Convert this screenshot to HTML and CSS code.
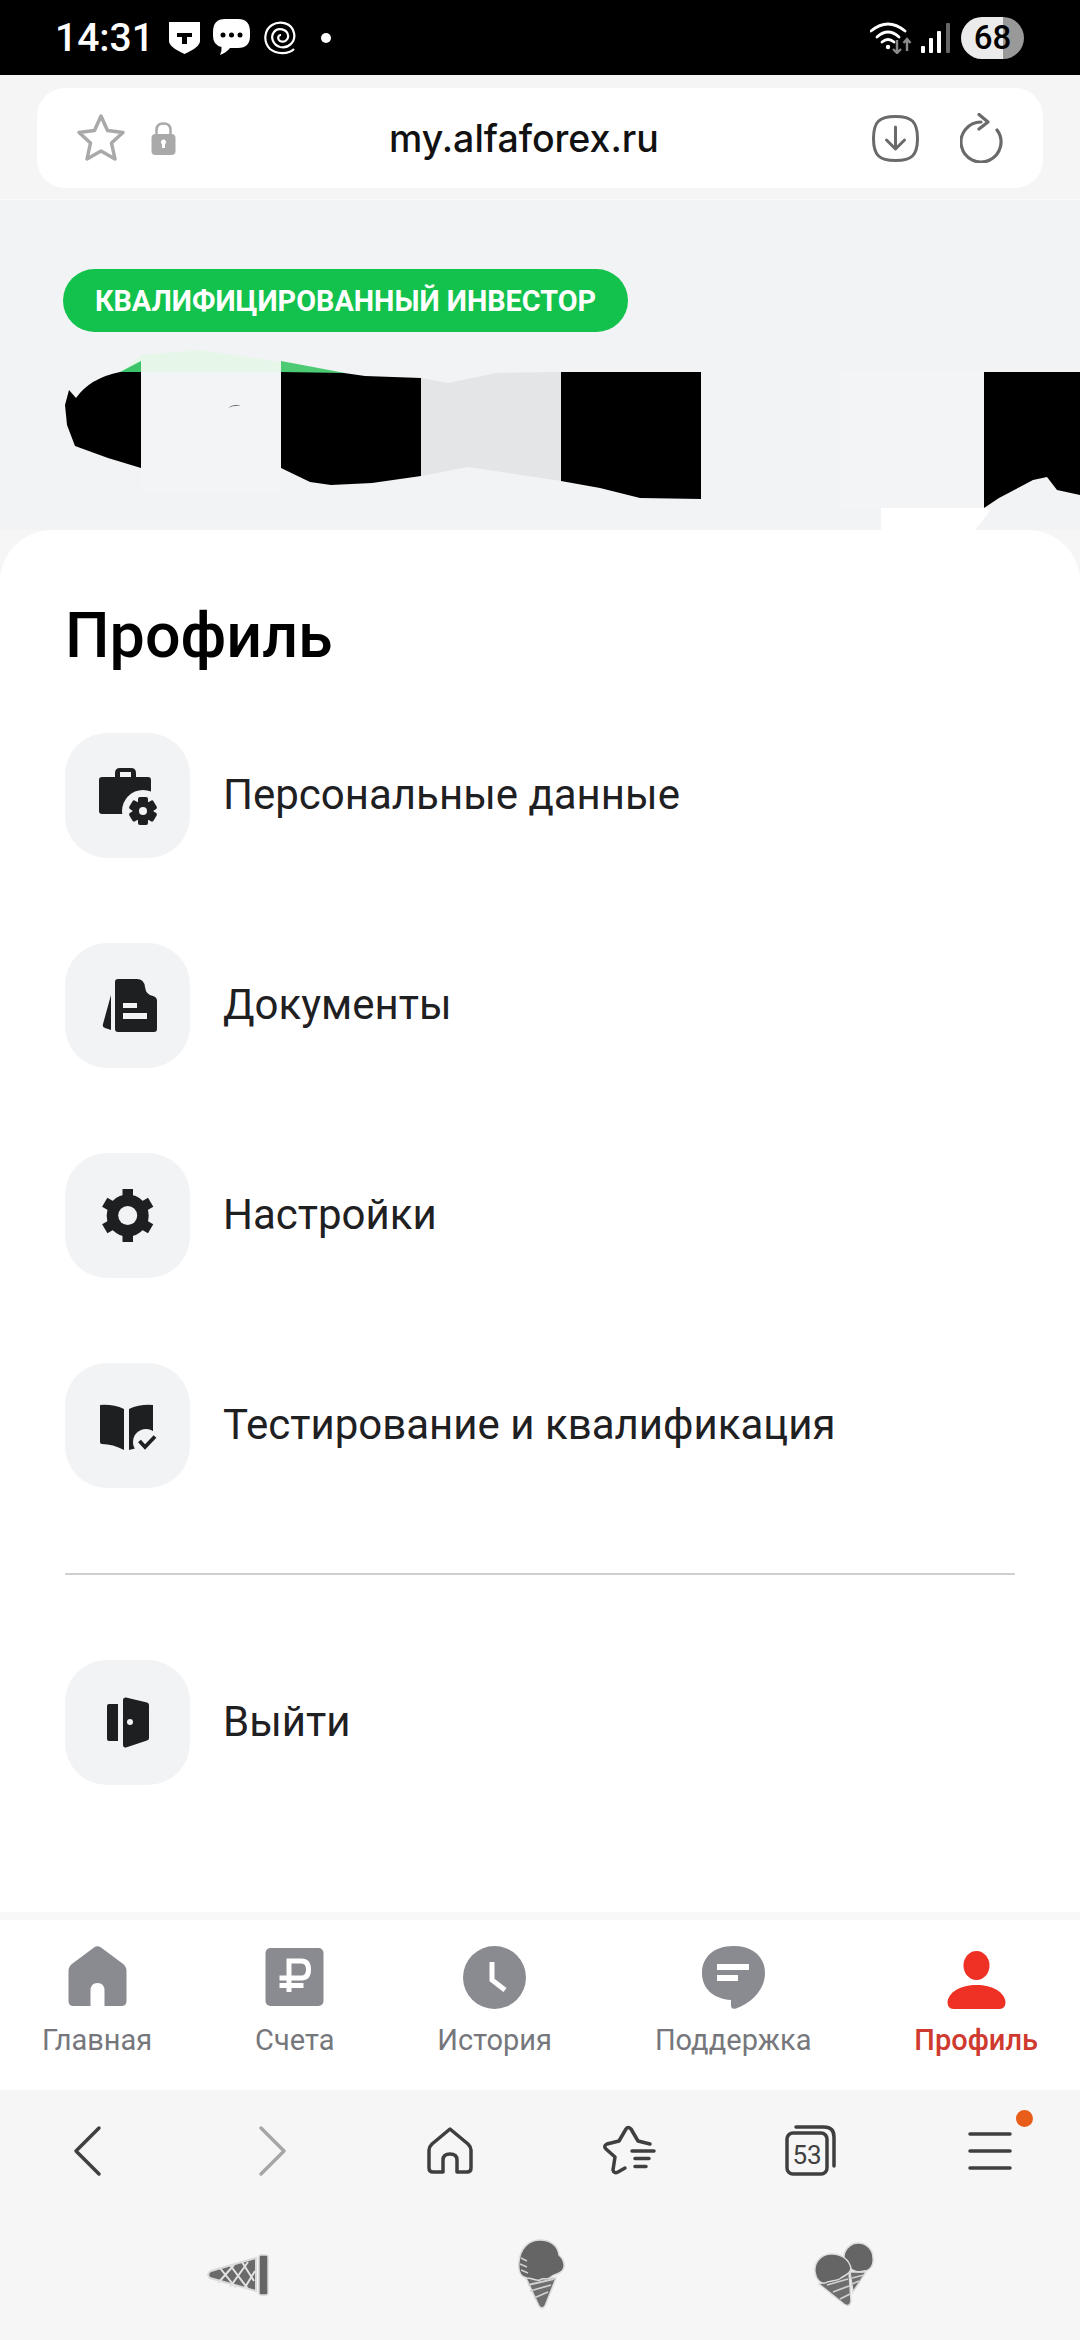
FILE: index.html
```html
<!DOCTYPE html>
<html lang="ru">
<head>
    <meta charset="UTF-8">
    <meta name="viewport" content="width=device-width, initial-scale=1.0">
    <title>Профиль</title>
    <link rel="stylesheet" href="styles.css">
</head>
<body>
    <!-- Status bar -->
    <div class="status-bar">
        <div class="status-left">
            <span class="status-time">14:31</span>
            <svg class="st-shield" viewBox="0 0 31 32"><path d="M0 0H31V19Q31 25 15.500 32Q0 25 0 19Z" fill="#fff"/><path d="M8 11H23V15H18V22H13V15H8Z" fill="#000"/></svg>
            <svg class="st-bubble" viewBox="0 0 37 37"><path d="M12 0H25Q37 0 37 13V17Q37 29 25 29H17Q13 34 7 36Q9 32 8.500 28Q0 26 0 17V13Q0 0 12 0Z" fill="#fff"/><circle cx="10" cy="16" r="2.500"/><circle cx="18.500" cy="16" r="2.500"/><circle cx="27" cy="16" r="2.500"/></svg>
            <svg class="st-spiral" viewBox="0 0 32 34" fill="none" stroke="#fff" stroke-width="2.200"><path d="M30 28C24 34 12 33 6 28C-1 21 0 9 8 4C16 -1 28 2 30 12C32 21 24 28 16 26C9 24 6 16 10 11C14 6 23 8 24 14C25 19 20 22 16 20C13 18 14 14 17 14"/></svg>
            <span class="status-dot"></span>
        </div>
        <div class="status-right">
            <svg class="st-wifi" viewBox="0 0 42 32" fill="none"><g stroke="#fff" stroke-width="2.800" stroke-linecap="round"><path d="M1 9Q18 -5 35 9"/><path d="M7 15Q18 5 29 15"/><path d="M12 20Q18 15 24 20"/></g><circle cx="18" cy="25" r="2.200" fill="#fff"/><g stroke="#8a8a8a" stroke-width="2.400" fill="none"><path d="M27 18V31M23 27L27 31L31 27"/><path d="M37 29V17M33.500 21L37 17L40.500 21"/></g></svg>
            <svg class="st-signal" viewBox="0 0 29 30"><rect x="0" y="23" width="4" height="7" rx="1" fill="#fff"/><rect x="8" y="15" width="4" height="15" rx="1" fill="#fff"/><rect x="16" y="8" width="4" height="22" rx="1" fill="#fff"/><rect x="25" y="0" width="4" height="30" rx="1" fill="#666"/></svg>
            <div class="battery"><span class="battery-level">68</span></div>
        </div>
    </div>

    <!-- Address bar -->
    <div class="address-wrap">
        <div class="address-bar">
            <svg class="addr-star" viewBox="0 0 50 50"><path d="M25 3L31.500 17.500L47 19.500L35.500 30L39 46L25 38L11 46L14.500 30L3 19.500L18.500 17.500Z" fill="none" stroke="#a9a9a9" stroke-width="3.500" stroke-linejoin="round"/></svg>
            <svg class="addr-lock" viewBox="0 0 25 33"><path d="M5.500 15V8Q5.500 1.500 12.500 1.500Q19.500 1.500 19.500 8V15" fill="none" stroke="#a9a9a9" stroke-width="2.500"/><rect x="0.500" y="12" width="24" height="21" rx="4" fill="#a9a9a9"/><path d="M12.500 18V26" stroke="#fff" stroke-width="3"/><circle cx="12.500" cy="20" r="2.500" fill="#fff"/></svg>
            <span class="address-text">my.alfaforex.ru</span>
            <svg class="addr-download" viewBox="0 0 47 47" fill="none" stroke="#6a6a6a" stroke-width="3" stroke-linecap="round" stroke-linejoin="round"><path d="M23.500 1.500C40 1.500 45.500 7 45.500 23.500C45.500 40 40 45.500 23.500 45.500C7 45.500 1.500 40 1.500 23.500C1.500 7 7 1.500 23.500 1.500Z"/><path d="M23.500 12V33M14.500 25L23.500 34L32.500 25"/></svg>
            <svg class="addr-reload" viewBox="0 0 44 50" fill="none" stroke="#6a6a6a" stroke-width="3.200" stroke-linecap="round" stroke-linejoin="round"><path d="M21 9A20 20 0 1 0 37 17"/><path d="M19 1.500L28 9L19 16"/></svg>
        </div>
    </div>

    <!-- Hero with the hidden personal data -->
    <div class="hero">
        <span class="badge">КВАЛИФИЦИРОВАННЫЙ ИНВЕСТОР</span>
        <svg class="hero-mask" viewBox="0 340 1080 190">
            <path d="M120 372L141 355L200 350L281 362L345 373H141Z" fill="#e6f7ea"/>
            <path d="M120 372L141 361V372Z" fill="#3cc468"/>
            <path d="M281 361L345 373H281Z" fill="#4ccb74"/>
            <rect x="141" y="372" width="140" height="120" fill="#f3f4f6"/>
            <path d="M228 408Q234 403 241 406Q234 405 228 408Z" fill="#555"/>
            <path d="M141 372V468L108 458L75 446L67 425L65 405L69 390L76 398Q90 378 120 372Z" fill="#000"/>
            <path d="M281 372L344 373L365 376L421 378V476L372 483L331 485L310 482L281 468Z" fill="#000"/>
            <path d="M421 378L448 383L496 373L561 372V481L468 467L421 476Z" fill="#e4e5e7"/>
            <path d="M561 372H701V499L640 498L600 488L561 481Z" fill="#000"/>
            <rect x="840" y="372" width="144" height="136" fill="#f3f4f6"/>
            <path d="M984 372H1080V495L1057 490L1047 477L1033 480L999 498L984 508Z" fill="#000"/>
            <path d="M881 508H985L990 511L975 530H881Z" fill="#fff"/>
        </svg>
    </div>

    <!-- Profile card -->
    <div class="card">
        <h1 class="card-title">Профиль</h1>
        <div class="menu-list">
            <div class="menu-item">
                <span class="menu-icon">
                    <svg viewBox="0 0 125 125" fill="#1e1f21">
                        <path d="M50 44V40Q50 35 55 35H66Q71 35 71 40V44H83Q86 44 86 47V81H37Q34 81 34 78V47Q34 44 37 44ZM55 44H66V39H55Z" fill-rule="evenodd"/>
                        <circle cx="78" cy="78" r="21" fill="#f2f3f5"/>
                        <g>
                            <rect x="73" y="64" width="10" height="28" rx="2"/>
                            <rect x="73" y="64" width="10" height="28" rx="2" transform="rotate(60 78 78)"/>
                            <rect x="73" y="64" width="10" height="28" rx="2" transform="rotate(120 78 78)"/>
                        </g>
                        <circle cx="78" cy="78" r="10.500"/>
                        <circle cx="78" cy="78" r="4" fill="#f2f3f5"/>
                    </svg>
                </span>
                <span class="menu-label">Персональные данные</span>
            </div>
            <div class="menu-item">
                <span class="menu-icon">
                    <svg viewBox="0 0 125 125" fill="#1e1f21">
                        <path d="M53 36H72Q79 36 80 44Q81 52 88 53Q92 54 92 58V86Q92 89 89 89H53Q50 89 50 86V39Q50 36 53 36Z"/>
                        <path d="M46 52V87L40 85Q37 84 38 81Z"/>
                        <rect x="58" y="60" width="14" height="5" fill="#f2f3f5"/>
                        <rect x="58" y="70" width="24" height="6" fill="#f2f3f5"/>
                    </svg>
                </span>
                <span class="menu-label">Документы</span>
            </div>
            <div class="menu-item">
                <span class="menu-icon">
                    <svg viewBox="0 0 125 125" fill="#1e1f21">
                        <rect x="57.500" y="36" width="10.500" height="53"/>
                        <rect x="57.500" y="36" width="10.500" height="53" transform="rotate(60 62.700 62.500)"/>
                        <rect x="57.500" y="36" width="10.500" height="53" transform="rotate(120 62.700 62.500)"/>
                        <circle cx="62.700" cy="62.500" r="21"/>
                        <circle cx="62.700" cy="62.500" r="9.500" fill="#f2f3f5"/>
                    </svg>
                </span>
                <span class="menu-label">Настройки</span>
            </div>
            <div class="menu-item">
                <span class="menu-icon">
                    <svg viewBox="0 0 125 125" fill="#1e1f21">
                        <path d="M35 42Q48 41 59 46V87Q48 81 37 81Q35 81 35 79Z"/>
                        <path d="M64 46Q75 41 88 42V79Q88 81 86 81H64Z"/>
                        <path d="M64 87V81L72 80L72 85Z"/>
                        <circle cx="81" cy="79" r="13" fill="#f2f3f5"/>
                        <path d="M74.500 78L80 84L90 73.500" fill="none" stroke="#1e1f21" stroke-width="3.800"/>
                    </svg>
                </span>
                <span class="menu-label">Тестирование и квалификация</span>
            </div>
        </div>
        <div class="divider"></div>
        <div class="menu-item">
            <span class="menu-icon">
                <svg viewBox="0 0 125 125" fill="#1e1f21">
                    <path d="M44 44H53V81H44Q42 81 42 79V46Q42 44 44 44Z"/>
                    <path d="M58 40Q58 37 61 37.500L82 42.500Q84 43 84 45V78Q84 80 82 80.500L61 87.500Q58 88 58 85Z"/>
                    <circle cx="65" cy="62" r="3" fill="#f2f3f5"/>
                </svg>
            </span>
            <span class="menu-label">Выйти</span>
        </div>
    </div>

    <!-- Site navigation -->
    <nav class="tabs">
        <div class="tab">
            <svg class="tab-icon" viewBox="-2.500 0 63 63" fill="#8a8b91"><path d="M25.500 1.500Q29 -1 32.500 1.500L54 17.500Q58 20.500 58 25V55Q58 60 53 60H36V45Q36 37 29 37Q22 37 22 45V60H5Q0 60 0 55V25Q0 20.500 4 17.500Z"/></svg>
            <span class="tab-label">Главная</span>
        </div>
        <div class="tab">
            <svg class="tab-icon" viewBox="-2.500 -2 63 63"><rect width="58" height="58" rx="5" fill="#8a8b91"/><path d="M23.500 44V13H36Q43 13 43 21.500Q43 30 36 30H14M14 37.500H38" fill="none" stroke="#fff" stroke-width="5"/></svg>
            <span class="tab-label">Счета</span>
        </div>
        <div class="tab">
            <svg class="tab-icon" viewBox="0 0 63 63"><circle cx="31.500" cy="31.500" r="31.500" fill="#8a8b91"/><path d="M29 16V34L42 44" fill="none" stroke="#fff" stroke-width="5"/></svg>
            <span class="tab-label">История</span>
        </div>
        <div class="tab">
            <svg class="tab-icon" viewBox="0 0 63 63"><path d="M31.500 0C51 0 63 11 63 27C63 42 52 56 34 62.500Q29 64 29 59V54C12 53 0 43 0 27C0 11 12 0 31.500 0Z" fill="#8a8b91"/><rect x="15" y="18" width="32" height="6" fill="#fff"/><rect x="15" y="29" width="21" height="6" fill="#fff"/></svg>
            <span class="tab-label">Поддержка</span>
        </div>
        <div class="tab tab-active">
            <svg class="tab-icon" viewBox="-2.500 -5 63 63" fill="#ee3124"><ellipse cx="29" cy="14.500" rx="13" ry="14.500"/><path d="M0 51C1 41 13 34 29 34C45 34 57 41 58 51Q58 58 52 58H6Q0 58 0 51Z"/></svg>
            <span class="tab-label">Профиль</span>
        </div>
    </nav>

    <!-- Browser toolbar -->
    <div class="browser-bottom">
        <div class="toolbar">
            <svg class="tool" viewBox="0 0 60 60" fill="none" stroke="#3f3f3f" stroke-width="3.500" stroke-linecap="round" stroke-linejoin="round"><path d="M39 7L16 30L39 53"/></svg>
            <svg class="tool" viewBox="0 0 60 60" fill="none" stroke="#a6a6a6" stroke-width="3.500" stroke-linecap="round" stroke-linejoin="round"><path d="M21 7L44 30L21 53"/></svg>
            <svg class="tool" viewBox="0 0 60 60" fill="none" stroke="#3f3f3f" stroke-width="3.500" stroke-linejoin="round"><path d="M30 8L48 23Q51 26 51 29V47Q51 51 47 51H37V39Q37 33 30 33Q23 33 23 39V51H13Q9 51 9 47V29Q9 26 12 23Z"/></svg>
            <svg class="tool" viewBox="0 0 60 60" fill="none" stroke="#3f3f3f" stroke-width="3.500" stroke-linecap="round" stroke-linejoin="round"><path d="M32 30H54M35 37.500H49M35 45.500H46"/><path d="M50 23L38 20L31 8Q28 5 26 8L19 20L7 23Q3 25 6 28L15 36L13 49Q14 53 18 51L25 47"/></svg>
            <svg class="tool" viewBox="0 0 60 60" fill="none" stroke="#3f3f3f" stroke-width="3.500" stroke-linecap="round"><rect x="7" y="12" width="40" height="41" rx="6"/><path d="M16 6H44Q54 6 54 16V45"/><text class="tool-count" x="27" y="43" text-anchor="middle">53</text></svg>
            <div class="tool tool-menu">
                <svg viewBox="0 0 60 60" fill="none" stroke="#3f3f3f" stroke-width="3.500" stroke-linecap="round"><path d="M10 13H50M10 30H50M10 47H50"/></svg>
                <span class="menu-dot"></span>
            </div>
        </div>
        <div class="stickers">
            <svg class="sticker-cone" viewBox="0 0 63 43">
                <path d="M50 5L5 18Q0 21 4 25L50 38Z" fill="#6a6a6a" stroke="#d9d9d9" stroke-width="2"/>
                <path d="M14 15L30 35M24 12L42 36M36 9L48 28M12 30L28 12M24 34L42 9M38 36L49 18" stroke="#e2e2e2" stroke-width="2" fill="none"/>
                <rect x="53" y="2" width="9" height="40" rx="2" fill="#666" stroke="#d9d9d9" stroke-width="1.500"/>
            </svg>
            <svg class="sticker-one" viewBox="0 0 47 72">
                <path d="M8 40L21 68Q24 72 27 68L38 40Z" fill="#6e6e6e" stroke="#dcdcdc" stroke-width="1.500"/>
                <path d="M10 47L36 41M12 53L33 47M16 60L30 54" stroke="#d0d0d0" stroke-width="1.800" fill="none"/>
                <path d="M22 2C33 2 40 8 41 17C46 21 48 29 44 33C40 37 36 36 33 39C29 43 25 39 22 42C18 43 14 40 9 40C2 39 0 32 1 24C2 11 10 2 22 2Z" fill="#656565" stroke="#dcdcdc" stroke-width="1.500"/>
                <path d="M3 20L9 23M2 26L9 29M3 32L10 35" stroke="#cfcfcf" stroke-width="1.500" fill="none"/>
            </svg>
            <svg class="sticker-two" viewBox="0 0 60 67">
                <path d="M36 31H52L39 51Z" fill="#6e6e6e" stroke="#dcdcdc" stroke-width="1.500"/>
                <path d="M38 37L50 34M38 43L45 40" stroke="#d0d0d0" stroke-width="1.500" fill="none"/>
                <path d="M44 2C53 2 59 9 59 17C60 24 56 30 50 30C44 32 38 30 35 26C30 23 29 15 31 11C34 5 38 2 44 2Z" fill="#656565" stroke="#dcdcdc" stroke-width="1.500"/>
                <path d="M5 43L35 31L37 60Q36 67 30 63Z" fill="#6e6e6e" stroke="#dcdcdc" stroke-width="1.500"/>
                <path d="M13 44L34 38M19 51L35 45M26 58L36 53" stroke="#d0d0d0" stroke-width="1.800" fill="none"/>
                <path d="M16 13C27 12 36 19 37 28C36 33 31 34 27 37C22 41 15 39 11 42C6 43 2 38 1 31C0 22 6 14 16 13Z" fill="#656565" stroke="#dcdcdc" stroke-width="1.500"/>
            </svg>
        </div>
    </div>
</body>
</html>
```

FILE: styles.css
```css
* {
    box-sizing: border-box;
}
html {
    overflow: hidden;
}
body {
    margin: 0;
    width: 1080px;
    height: 2340px;
    overflow: hidden;
    font-family: Roboto, "Noto Sans", sans-serif;
    background-color: #f6f6f6;
    color: #1f2022;
}
svg {
    display: block;
}

/* Status bar */
.status-bar {
    height: 75px;
    background-color: #000;
    display: flex;
    justify-content: space-between;
    align-items: center;
    padding: 0 56px 0 55px;
}
.status-left,
.status-right {
    display: flex;
    align-items: center;
}
.status-time {
    color: #fff;
    font-size: 39px;
    font-weight: 500;
    width: 114px;
}
.st-shield {
    width: 31px;
    height: 32px;
    margin-right: 13px;
}
.st-bubble {
    width: 37px;
    height: 37px;
    margin-right: 14px;
}
.st-spiral {
    width: 32px;
    height: 34px;
    margin-right: 25px;
}
.status-dot {
    width: 10px;
    height: 10px;
    border-radius: 50%;
    background-color: #fff;
}
.st-wifi {
    width: 42px;
    height: 32px;
    margin-right: 9px;
}
.st-signal {
    width: 29px;
    height: 30px;
    margin-right: 11px;
}
.battery {
    width: 63px;
    height: 42px;
    border-radius: 21px;
    background: linear-gradient(to right, #ebebeb 66%, #999 66%);
    color: #000;
    font-size: 33px;
    font-weight: 500;
    display: flex;
    align-items: center;
    justify-content: center;
}

/* Address bar */
.address-wrap {
    height: 125px;
    padding: 13px 37px 12px 37px;
    background-color: #f5f5f6;
    border-bottom: 1px solid #fbfbfb;
}
.address-bar {
    height: 100px;
    background-color: #fff;
    border-radius: 28px;
    display: flex;
    align-items: center;
    position: relative;
    padding-left: 39px;
}
.addr-star {
    width: 50px;
    height: 50px;
    margin-right: 25px;
}
.addr-lock {
    width: 25px;
    height: 33px;
}
.address-text {
    margin-left: 213px;
    width: 268px;
    font-family: Inter, Roboto, sans-serif;
    font-size: 37.500px;
    font-weight: 500;
    color: #111;
    white-space: nowrap;
}
.addr-download {
    width: 47px;
    height: 47px;
    margin-left: 215px;
}
.addr-reload {
    width: 44px;
    height: 50px;
    margin-left: 41px;
}

/* Hero */
.hero {
    height: 330px;
    padding-top: 69px;
    background-color: #f2f3f5;
}
.badge {
    display: flex;
    align-items: center;
    justify-content: center;
    width: 565px;
    height: 63px;
    margin-left: 63px;
    border-radius: 32px;
    background-color: #12c24c;
    color: #fff;
    font-size: 28.800px;
    font-weight: 700;
    white-space: nowrap;
}
.hero-mask {
    width: 1080px;
    height: 190px;
    margin-top: 8px;
}

/* Profile card */
.card {
    height: 1390px;
    padding: 73px 65px 0;
    position: relative;
    background-color: #fff;
    border-radius: 52px 52px 0 0;
}
.card-title {
    margin: 0 0 64px;
    font-size: 62.800px;
    line-height: 66px;
    font-weight: 500;
    color: #000;
}
.menu-list {
    display: flex;
    flex-direction: column;
    gap: 85px;
}
.menu-item {
    display: flex;
    align-items: center;
    gap: 33px;
}
.menu-icon {
    width: 125px;
    height: 125px;
    border-radius: 42px;
    background-color: #f2f3f5;
    flex-shrink: 0;
}
.menu-label {
    font-size: 42px;
    line-height: 48px;
    margin-top: -2px;
    color: #1f2022;
}
.divider {
    height: 2px;
    width: 950px;
    margin: 85px 0;
    background-color: #cfcfd1;
}

/* Site navigation */
.tabs {
    height: 170px;
    padding: 26px 42px 0;
    position: relative;
    display: flex;
    justify-content: space-between;
    align-items: flex-start;
    background-color: #fff;
    box-shadow: 0 -8px 0 #f8f8f8;
}
.tab {
    display: flex;
    flex-direction: column;
    align-items: center;
}
.tab-icon {
    width: 63px;
    height: 63px;
}
.tab-label {
    margin-top: 14px;
    font-size: 29px;
    line-height: 34px;
    color: #76777c;
    white-space: nowrap;
}
.tab-active .tab-label {
    color: #cf3a30;
    font-weight: 500;
}

/* Browser toolbar */
.browser-bottom {
    height: 250px;
    background-color: #f6f6f6;
}
.toolbar {
    display: grid;
    grid-template-columns: repeat(6, 1fr);
    justify-items: center;
    padding-top: 31px;
}
.tool {
    width: 60px;
    height: 60px;
}
.tool-menu {
    position: relative;
}
.tool-count {
    font-family: Roboto, sans-serif;
    font-size: 26px;
    fill: #3f3f3f;
    stroke: none;
}
.menu-dot {
    position: absolute;
    top: -11px;
    right: -13px;
    width: 17px;
    height: 17px;
    border-radius: 50%;
    background-color: #e85d1a;
}
.stickers {
    display: flex;
    justify-content: center;
    align-items: center;
    gap: 249px;
    padding-top: 57px;
}
.sticker-cone {
    width: 63px;
    height: 43px;
}
.sticker-one {
    width: 47px;
    height: 72px;
}
.sticker-two {
    width: 60px;
    height: 67px;
}
```
